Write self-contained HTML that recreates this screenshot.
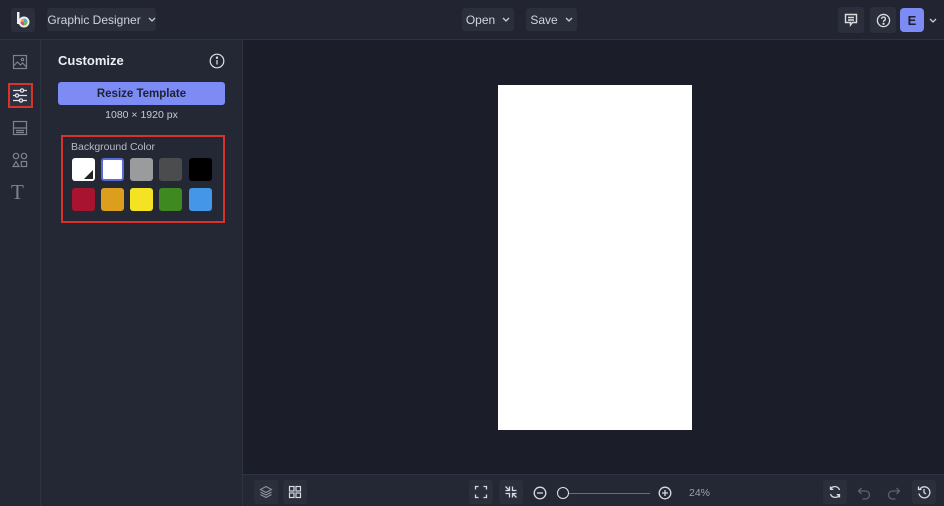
<!DOCTYPE html>
<html><head><meta charset="utf-8"><style>
*{box-sizing:border-box;margin:0;padding:0}
body{width:944px;height:506px;overflow:hidden;background:#1b1e29;font-family:"Liberation Sans",sans-serif;color:#d8dae2;position:relative}
.top{position:absolute;left:0;top:0;width:944px;height:40px;background:#222531;border-bottom:1px solid #2d3140}
.btn{position:absolute;background:#2b2f3c;border-radius:3px;font-size:12px;color:#d0d3dc;display:flex;align-items:center;justify-content:center}
.side{position:absolute;left:0;top:40px;width:41px;height:466px;background:#242834;border-right:1px solid #2f3341}
.panel{position:absolute;left:41px;top:40px;width:202px;height:466px;background:#242834;border-right:1px solid #2f3341}
.canvas{position:absolute;left:243px;top:40px;width:701px;height:434px;background:#1b1e29}
.bot{position:absolute;left:243px;top:474px;width:701px;height:32px;background:#242834;border-top:1px solid #2f3341}
.ib{position:absolute;width:24px;height:24px;background:#2b2f3c;border-radius:3px;display:flex;align-items:center;justify-content:center}
.sw{position:absolute;width:23px;height:23px;border-radius:3px}
svg{display:block}
.chev{margin-left:7px}
</style></head><body>
<div class="top">
 <div class="btn" style="left:11px;top:8px;width:24px;height:24px;background:#2b2f3c">
  <svg width="16" height="18" viewBox="0 0 16 18"><rect x="2" y="1" width="2.5" height="12" fill="#eee"/><circle cx="9" cy="11" r="5.5" fill="#eee"/><circle cx="9" cy="11" r="3.5" fill="#e8a23a"/><path d="M9 7.5a3.5 3.5 0 0 1 3.5 3.5H9z" fill="#4fa3e0"/><path d="M9 11h-3.5a3.5 3.5 0 0 0 3.5 3.5z" fill="#d94c7a"/><path d="M9 11h3.5a3.5 3.5 0 0 1 -3.5 3.5z" fill="#6cbf4b"/></svg>
 </div>
 <div class="btn" style="left:47px;top:8px;width:109px;height:23px">Graphic Designer<svg class="chev" width="8" height="5" viewBox="0 0 8 5" fill="none" stroke="#ccc" stroke-width="1.3"><path d="M1 1l3 3 3-3"/></svg></div>
 <div class="btn" style="left:462px;top:8px;width:52px;height:23px">Open<svg class="chev" width="8" height="5" viewBox="0 0 8 5" fill="none" stroke="#ccc" stroke-width="1.3"><path d="M1 1l3 3 3-3"/></svg></div>
 <div class="btn" style="left:526px;top:8px;width:51px;height:23px">Save<svg class="chev" width="8" height="5" viewBox="0 0 8 5" fill="none" stroke="#ccc" stroke-width="1.3"><path d="M1 1l3 3 3-3"/></svg></div>
 <div class="btn" style="left:838px;top:7px;width:26px;height:26px"><svg width="14" height="14" viewBox="0 0 14 14" fill="none" stroke="#ddd" stroke-width="1.4"><path d="M1.5 1.5h11v8h-4l-2 2.5v-2.5h-5z"/><path d="M4 4.5h6M4 7h6"/></svg></div>
 <div class="btn" style="left:870px;top:7px;width:26px;height:26px"><svg width="15" height="15" viewBox="0 0 16 16" fill="none" stroke="#ddd" stroke-width="1.4"><circle cx="8" cy="8" r="6.5"/><path d="M6 6.3a2 2 0 1 1 2.6 1.9c-.6.2-.6.6-.6 1.3"/><circle cx="8" cy="11.5" r=".5" fill="#ddd"/></svg></div>
 <div class="btn" style="left:900px;top:8px;width:24px;height:24px;background:#7d8cf5;color:#1d2030;font-weight:bold;font-size:13px;border-radius:4px">E</div>
 <svg style="position:absolute;left:929px;top:18px" width="8" height="5" viewBox="0 0 8 5" fill="none" stroke="#ccc" stroke-width="1.3"><path d="M1 1l3 3 3-3"/></svg>
</div>
<div class="side">
 <svg style="position:absolute;left:12px;top:14px" width="16" height="16" viewBox="0 0 16 16" fill="none" stroke="#7d8291" stroke-width="1.2"><rect x="1.5" y="1.5" width="13" height="13"/><path d="M1.5 12l4-4 3 3 2-2 4 4"/><circle cx="10.5" cy="5.5" r="1.2"/></svg>
 <div style="position:absolute;left:8px;top:43px;width:25px;height:25px;border:2px solid #d8322b;background:#2e3240"></div>
 <svg style="position:absolute;left:12px;top:48px" width="16" height="15" viewBox="0 0 16 15" fill="none" stroke="#e0e2e8" stroke-width="1.3"><path d="M1 2.5h14M1 7.5h14M1 12.5h14"/><circle cx="10" cy="2.5" r="1.6" fill="#2e3240"/><circle cx="5" cy="7.5" r="1.6" fill="#2e3240"/><circle cx="9" cy="12.5" r="1.6" fill="#2e3240"/></svg>
 <svg style="position:absolute;left:12px;top:80px" width="16" height="16" viewBox="0 0 16 16" fill="none" stroke="#7d8291" stroke-width="1.2"><rect x="1.5" y="1.5" width="13" height="13"/><path d="M1.5 8h13M4 10.5h8M4 12.5h8"/></svg>
 <svg style="position:absolute;left:12px;top:112px" width="16" height="16" viewBox="0 0 16 16" fill="none" stroke="#7d8291" stroke-width="1.2"><circle cx="4" cy="4" r="2.7"/><circle cx="12" cy="4" r="2.7"/><path d="M4 9.5l3 5h-6z"/><rect x="9.3" y="9.5" width="5.3" height="5"/></svg>
 <div style="position:absolute;left:11px;top:140px;font-family:'Liberation Serif',serif;font-size:21px;color:#7d8291">T</div>
</div>
<div class="panel">
 <div style="position:absolute;left:17px;top:13px;font-size:13px;font-weight:bold;color:#eceef3">Customize</div>
 <svg style="position:absolute;left:168px;top:13px" width="16" height="16" viewBox="0 0 16 16" fill="none" stroke="#e0e2e8" stroke-width="1.2"><circle cx="8" cy="8" r="6.8"/><path d="M8 7v4.5"/><circle cx="8" cy="4.7" r=".6" fill="#e0e2e8"/></svg>
 <div style="position:absolute;left:17px;top:42px;width:167px;height:23px;background:#7d8cf5;border-radius:3px;color:#1e2133;font-size:11.5px;font-weight:bold;display:flex;align-items:center;justify-content:center">Resize Template</div>
 <div style="position:absolute;left:17px;top:69px;width:167px;text-align:center;font-size:10.5px;color:#c8cad3">1080 × 1920 px</div>
 <div style="position:absolute;left:20px;top:95px;width:164px;height:88px;border:2px solid #d8322b"></div>
 <div style="position:absolute;left:30px;top:101px;font-size:10.5px;color:#b8bbc6">Background Color</div>
 <div class="sw" style="left:31px;top:118px;background:#fff"><div style="position:absolute;right:2px;bottom:2px;width:0;height:0;border-left:9px solid transparent;border-bottom:9px solid #222"></div></div>
 <div class="sw" style="left:60px;top:118px;background:#fff;border:2px solid #5a6ad8"></div>
 <div class="sw" style="left:89px;top:118px;background:#9a9b9d"></div>
 <div class="sw" style="left:118px;top:118px;background:#4a4c4e"></div>
 <div class="sw" style="left:148px;top:118px;background:#000"></div>
 <div class="sw" style="left:31px;top:148px;background:#a8132f"></div>
 <div class="sw" style="left:60px;top:148px;background:#dc9e1d"></div>
 <div class="sw" style="left:89px;top:148px;background:#f4e322"></div>
 <div class="sw" style="left:118px;top:148px;background:#3f8a20"></div>
 <div class="sw" style="left:148px;top:148px;background:#4396e8"></div>
</div>
<div class="canvas"><div style="position:absolute;left:255px;top:45px;width:194px;height:345px;background:#fff"></div></div>
<div class="bot">
 <div class="ib" style="left:11px;top:5px"><svg width="14" height="14" viewBox="0 0 14 14" fill="none" stroke="#8d919e" stroke-width="1.1"><path d="M7 1.5l5.5 3-5.5 3-5.5-3z"/><path d="M1.5 7l5.5 3 5.5-3M1.5 9.5l5.5 3 5.5-3"/></svg></div>
 <div class="ib" style="left:40px;top:5px"><svg width="14" height="14" viewBox="0 0 14 14" fill="none" stroke="#d8dae2" stroke-width="1.2"><rect x="1.5" y="1.5" width="4.5" height="4.5"/><rect x="8" y="1.5" width="4.5" height="4.5"/><rect x="1.5" y="8" width="4.5" height="4.5"/><rect x="8" y="8" width="4.5" height="4.5"/></svg></div>
 <div class="ib" style="left:226px;top:5px"><svg width="14" height="14" viewBox="0 0 14 14" fill="none" stroke="#d8dae2" stroke-width="1.3"><path d="M1.5 4.5v-3h3M9.5 1.5h3v3M12.5 9.5v3h-3M4.5 12.5h-3v-3"/></svg></div>
 <div class="ib" style="left:256px;top:5px"><svg width="14" height="14" viewBox="0 0 14 14" fill="none" stroke="#d8dae2" stroke-width="1.3"><path d="M1.5 5.5h4v-4M5.5 5.5l-4-4M12.5 8.5h-4v4M8.5 8.5l4 4M8.5 1.5v4h4M1.5 8.5h4v4"/></svg></div>
 <svg style="position:absolute;left:290px;top:11px" width="14" height="14" viewBox="0 0 14 14" fill="none" stroke="#d8dae2" stroke-width="1.3"><circle cx="7" cy="7" r="5.8"/><path d="M4 7h6"/></svg>
 <div style="position:absolute;left:322px;top:18px;width:85px;height:1px;background:#6a6e7b"></div>
 <div style="position:absolute;left:314px;top:12px;width:12px;height:12px;border-radius:50%;border:1.5px solid #e0e2e8;background:#242834"></div>
 <svg style="position:absolute;left:415px;top:11px" width="14" height="14" viewBox="0 0 14 14" fill="none" stroke="#d8dae2" stroke-width="1.3"><circle cx="7" cy="7" r="5.8"/><path d="M4 7h6M7 4v6"/></svg>
 <div style="position:absolute;left:446px;top:12px;font-size:10.5px;color:#9da1ad">24%</div>
 <div class="ib" style="left:580px;top:5px"><svg width="14" height="14" viewBox="0 0 14 14" fill="none" stroke="#d8dae2" stroke-width="1.3"><path d="M11.5 5a5 5 0 0 0-9-1M2.5 9a5 5 0 0 0 9 1M2.5 1.5v2.8h2.8M11.5 12.5v-2.8h-2.8"/></svg></div>
 <svg style="position:absolute;left:614px;top:11px" width="14" height="14" viewBox="0 0 14 14" fill="none" stroke="#5d616e" stroke-width="1.3"><path d="M4.5 2l-3 3 3 3M1.5 5h7a4 4 0 0 1 0 8h-3"/></svg>
 <svg style="position:absolute;left:644px;top:11px" width="14" height="14" viewBox="0 0 14 14" fill="none" stroke="#5d616e" stroke-width="1.3"><path d="M9.5 2l3 3-3 3M12.5 5h-7a4 4 0 0 0 0 8h3"/></svg>
 <div class="ib" style="left:669px;top:5px"><svg width="14" height="14" viewBox="0 0 14 14" fill="none" stroke="#d8dae2" stroke-width="1.3"><path d="M3 4a5.5 5.5 0 1 1-1 4.5M1.5 1.5v3h3M7 4v3.5l2 1.5"/></svg></div>
</div>
</body></html>
